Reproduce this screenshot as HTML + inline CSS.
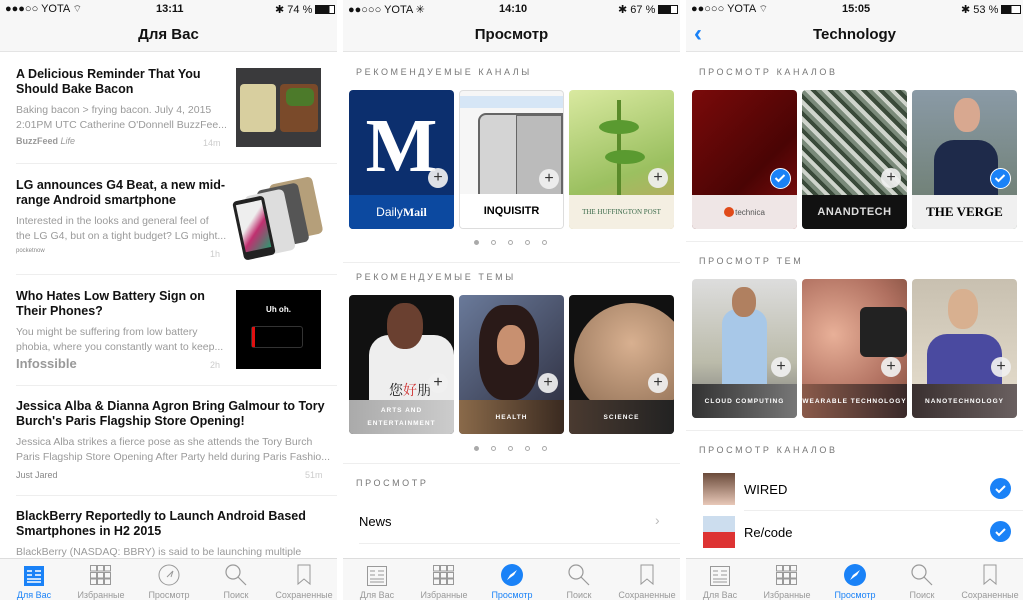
<!DOCTYPE html>
<html><head><meta charset="utf-8"><style>
*{margin:0;padding:0;box-sizing:border-box}
body{width:1023px;height:600px;overflow:hidden;background:#fff;font-family:"Liberation Sans","DejaVu Sans",sans-serif;position:relative;color:#000}
.p{position:absolute;top:0;height:600px;width:337px;overflow:hidden;background:#fff}
.a{position:absolute}
.sb{position:absolute;left:0;right:0;top:0;height:52px;background:#f7f7f7;border-bottom:1px solid #e4e4e4}
.st{position:absolute;top:3px;font-size:11px;color:#111}
.nt{position:absolute;top:26px;left:0;right:0;text-align:center;font-size:15px;font-weight:bold;color:#111}
.tb{position:absolute;left:0;right:0;top:558px;height:42px;background:#f7f7f7;border-top:1px solid #ddd}
.ti{position:absolute;top:31px;font-size:9px;color:#999;width:68px;text-align:center}
.h{font-weight:bold;font-size:12.5px;line-height:15px;color:#111}
.d{font-size:10.5px;line-height:15px;color:#9a9a9a}
.d span{display:block;white-space:nowrap;overflow:hidden}
.src{font-size:9px;color:#888}
.tm{font-size:9px;color:#ccc}
.sep{position:absolute;height:1px;background:#eee}
.lab{position:absolute;font-size:9px;letter-spacing:2.6px;color:#777}
.card{position:absolute;width:105px;height:139px;border-radius:4px;overflow:hidden}
.cb{position:absolute;left:0;right:0;bottom:0;height:34px;display:flex;align-items:center;justify-content:center;text-align:center}
.plus{position:absolute;width:20px;height:20px;border-radius:50%;background:rgba(240,240,240,.92);font-size:16px;line-height:19px;text-align:center;color:#333}
.chk{position:absolute;width:21px;height:21px;border-radius:50%;background:#1a82f7;border:1.5px solid #fff}
.tt{font-size:6.5px;letter-spacing:1px;color:#fff;font-weight:bold;line-height:13px}
.dots{position:absolute;display:flex;gap:12px}
.dots i{display:block;width:5px;height:5px;border-radius:50%;border:1px solid #aaa}
.dots i:first-child{background:#aaa}
</style></head><body>

<!-- PANEL 1 -->
<div class="p" style="left:0">
<div class="sb"><div class="st" style="left:5px">●●●○○ YOTA <span style="font-size:10px">⌔</span></div><div class="st" style="left:156px;font-weight:bold">13:11</div><div class="st" style="left:275px">✱ 74 % <span style="display:inline-block;width:20px;height:9px;border:1px solid #111;vertical-align:-1px;background:linear-gradient(90deg,#111 74%,#fff 74%)"></span></div>
<div class="nt">Для Вас</div></div>

<div class="a" style="left:16px;top:67px;width:210px"><div class="h">A Delicious Reminder That You Should Bake Bacon</div><div class="d" style="margin-top:6px"><span>Baking bacon &gt; frying bacon. July 4, 2015</span><span>2:01PM UTC Catherine O'Donnell BuzzFee...</span></div></div>
<div class="a src" style="left:16px;top:136px;font-weight:bold;color:#999">BuzzFeed <i style="font-weight:normal">Life</i></div><div class="a tm" style="left:203px;top:138px">14m</div>
<div class="a" style="left:236px;top:68px;width:85px;height:79px;background:#3a3a3c"><div class="a" style="left:4px;top:16px;width:36px;height:48px;background:#d8cf9f;border-radius:4px"></div><div class="a" style="left:44px;top:16px;width:38px;height:48px;background:#7a4a2a;border-radius:4px"></div><div class="a" style="left:50px;top:20px;width:28px;height:18px;background:#4c7a2a;border-radius:6px"></div></div>
<div class="sep" style="left:16px;right:0;top:163px"></div>

<div class="a" style="left:16px;top:178px;width:210px"><div class="h">LG announces G4 Beat, a new mid-range Android smartphone</div><div class="d" style="margin-top:6px"><span>Interested in the looks and general feel of</span><span>the LG G4, but on a tight budget? LG might...</span></div></div>
<div class="a src" style="left:16px;top:248px;font-size:6px">pocketnow</div><div class="a tm" style="left:210px;top:249px">1h</div>
<div class="a" style="left:236px;top:180px;width:85px;height:80px"><div class="a" style="left:38px;top:0;width:44px;height:58px;background:#b59f7a;transform:rotate(-12deg);border-radius:5px"></div><div class="a" style="left:26px;top:6px;width:42px;height:60px;background:#555;transform:rotate(-12deg);border-radius:5px"></div><div class="a" style="left:14px;top:12px;width:40px;height:62px;background:#ddd;transform:rotate(-12deg);border-radius:5px"></div><div class="a" style="left:2px;top:18px;width:32px;height:60px;background:#222;transform:rotate(-12deg);border-radius:4px"><div style="margin:4px 3px;height:48px;background:linear-gradient(135deg,#eee 40%,#c03070 60%,#2a9a70)"></div></div></div>
<div class="sep" style="left:16px;right:0;top:274px"></div>

<div class="a" style="left:16px;top:289px;width:210px"><div class="h">Who Hates Low Battery Sign on Their Phones?</div><div class="d" style="margin-top:6px"><span>You might be suffering from low battery</span><span>phobia, where you constantly want to keep...</span></div></div>
<div class="a" style="left:16px;top:356px;font-size:13px;font-weight:bold;color:#999">Infossible</div><div class="a tm" style="left:210px;top:360px">2h</div>
<div class="a" style="left:236px;top:290px;width:85px;height:79px;background:#000"><div class="a" style="left:0;right:0;top:15px;text-align:center;color:#fff;font-size:8px;font-weight:bold">Uh oh.</div><div class="a" style="left:15px;top:36px;width:52px;height:22px;border:1px solid #333;border-radius:3px"><div style="width:3px;height:20px;background:#e01010"></div></div></div>
<div class="sep" style="left:16px;right:0;top:385px"></div>

<div class="a" style="left:16px;top:399px;width:315px"><div class="h">Jessica Alba &amp; Dianna Agron Bring Galmour to Tory Burch's Paris Flagship Store Opening!</div><div class="d" style="margin-top:6px"><span>Jessica Alba strikes a fierce pose as she attends the Tory Burch</span><span>Paris Flagship Store Opening After Party held during Paris Fashio...</span></div></div>
<div class="a src" style="left:16px;top:470px">Just Jared</div><div class="a tm" style="left:305px;top:470px">51m</div>
<div class="sep" style="left:16px;right:0;top:495px"></div>

<div class="a" style="left:16px;top:509px;width:315px"><div class="h">BlackBerry Reportedly to Launch Android Based Smartphones in H2 2015</div><div class="d" style="margin-top:6px"><span>BlackBerry (NASDAQ: BBRY) is said to be launching multiple</span></div></div>

<div class="tb">
<svg class="a" style="left:24px;top:7px" width="20" height="20"><rect x="0" y="0" width="20" height="20" fill="#1a82f7"/><path d="M3 5h5M3 9h5M3 13h14M3 16h14M11 5h6M11 9h6" stroke="#fff" stroke-width="1.5"/></svg>
<div class="ti" style="left:0;color:#1a82f7">Для Вас</div>
<svg class="a" style="left:90px;top:6px" width="22" height="20" fill="none" stroke="#999"><rect x=".5" y=".5" width="6" height="5.5"/><rect x="7.5" y=".5" width="6" height="5.5"/><rect x="14.5" y=".5" width="6" height="5.5"/><rect x=".5" y="7.5" width="6" height="5.5"/><rect x="7.5" y="7.5" width="6" height="5.5"/><rect x="14.5" y="7.5" width="6" height="5.5"/><rect x=".5" y="14" width="6" height="5.5"/><rect x="7.5" y="14" width="6" height="5.5"/><rect x="14.5" y="14" width="6" height="5.5"/></svg>
<div class="ti" style="left:67px">Избранные</div>
<svg class="a" style="left:158px;top:5px" width="22" height="22" fill="none" stroke="#999"><circle cx="11" cy="11" r="10"/><path d="M15 7l-6 6M15 7l-2 6"/></svg>
<div class="ti" style="left:135px">Просмотр</div>
<svg class="a" style="left:225px;top:5px" width="22" height="22" fill="none" stroke="#999" stroke-width="1.2"><circle cx="8" cy="8" r="7"/><path d="M13 13l8 8"/></svg>
<div class="ti" style="left:202px">Поиск</div>
<svg class="a" style="left:297px;top:5px" width="14" height="22" fill="none" stroke="#999"><path d="M1 1h12v19l-6-5-6 5z"/></svg>
<div class="ti" style="left:270px">Сохраненные</div>
</div>
</div>

<!-- PANEL 2 -->
<div class="p" style="left:343px">
<div class="sb"><div class="st" style="left:5px">●●○○○ YOTA ✳</div><div class="st" style="left:156px;font-weight:bold">14:10</div><div class="st" style="left:275px">✱ 67 % <span style="display:inline-block;width:20px;height:9px;border:1px solid #111;vertical-align:-1px;background:linear-gradient(90deg,#111 67%,#fff 67%)"></span></div>
<div class="nt">Просмотр</div></div>
<div class="lab" style="left:13px;top:67px">РЕКОМЕНДУЕМЫЕ КАНАЛЫ</div>
<div class="card" style="left:6px;top:90px;background:#0c2f6e"><div class="a" style="left:0;right:0;top:16px;text-align:center;font-family:'Liberation Serif',serif;font-size:76px;font-weight:bold;color:#fff;line-height:80px">M</div><div class="cb" style="background:#0c49a0;color:#fff;font-size:12px">Daily<b style="font-family:'Liberation Serif',serif">Mail</b></div><div class="plus" style="left:79px;top:78px">+</div></div>
<div class="card" style="left:116px;top:90px;background:#f6f6f6;border:1px solid #ddd"><div class="a" style="left:0;right:0;top:5px;height:12px;background:#d6e6f6"></div><div class="a" style="left:18px;top:22px;width:86px;height:86px;background:#d4d4d4;border:2px solid #666;border-radius:8px 0 0 0"></div><div class="a" style="left:56px;top:24px;width:46px;height:82px;background:#bbb;border:1px solid #666"></div><div class="a" style="left:18px;top:104px;width:86px;height:5px;background:#b05a30"></div><div class="cb" style="background:#fff;font-weight:bold;font-size:11px">INQUISITR</div><div class="plus" style="left:79px;top:78px">+</div></div>
<div class="card" style="left:226px;top:90px;background:linear-gradient(160deg,#d9e9a0,#9bc060 60%,#c8a060)"><div class="a" style="left:48px;top:10px;width:4px;height:95px;background:#5a8a2a"></div><div class="a" style="left:30px;top:30px;width:40px;height:14px;background:#5a9a30;border-radius:50%"></div><div class="a" style="left:36px;top:60px;width:40px;height:14px;background:#5a9a30;border-radius:50%"></div><div class="cb" style="background:#f4efe2;font-family:'Liberation Serif',serif;font-size:7px;color:#3a6a4a">THE HUFFINGTON POST</div><div class="plus" style="left:79px;top:78px">+</div></div>
<div class="dots" style="left:131px;top:240px"><i></i><i></i><i></i><i></i><i></i></div>
<div class="sep" style="left:0;right:0;top:262px"></div>
<div class="lab" style="left:13px;top:272px">РЕКОМЕНДУЕМЫЕ ТЕМЫ</div>
<div class="card" style="left:6px;top:295px;background:#111"><div class="a" style="left:20px;top:40px;width:85px;height:70px;background:#eee;border-radius:20px 20px 0 0"></div><div class="a" style="left:38px;top:8px;width:36px;height:46px;background:#6a4030;border-radius:45%"></div><div class="a" style="left:40px;top:85px;font-size:14px;color:#222;font-family:'Noto Serif CJK SC',serif">您<span style="color:#d03030">好</span>朋</div><div class="cb" style="background:linear-gradient(90deg,#aaa,#ccc);"><div class="tt">ARTS AND<br>ENTERTAINMENT</div></div><div class="plus" style="left:79px;top:78px">+</div></div>
<div class="card" style="left:116px;top:295px;background:linear-gradient(135deg,#6a7a9a,#2a2a3a)"><div class="a" style="left:20px;top:10px;width:60px;height:95px;background:#2a1a18;border-radius:40%"></div><div class="a" style="left:38px;top:30px;width:28px;height:40px;background:#c89070;border-radius:45%"></div><div class="cb" style="background:linear-gradient(90deg,#8a6a4a,#3a2a20)"><div class="tt">HEALTH</div></div><div class="plus" style="left:79px;top:78px">+</div></div>
<div class="card" style="left:226px;top:295px;background:#111"><div class="a" style="left:5px;top:8px;width:115px;height:115px;border-radius:50%;background:radial-gradient(circle at 50% 35%,#d8b090,#8a6a50)"></div><div class="cb" style="background:linear-gradient(90deg,#4a3a30,#222)"><div class="tt">SCIENCE</div></div><div class="plus" style="left:79px;top:78px">+</div></div>
<div class="dots" style="left:131px;top:446px"><i></i><i></i><i></i><i></i><i></i></div>
<div class="sep" style="left:0;right:0;top:463px"></div>
<div class="lab" style="left:13px;top:478px">ПРОСМОТР</div>
<div class="a" style="left:16px;top:514px;font-size:13px">News</div>
<div class="a" style="left:312px;top:512px;font-size:14px;color:#bbb">›</div>
<div class="sep" style="left:16px;right:0;top:543px"></div>
<div class="tb">
<svg class="a" style="left:24px;top:7px" width="20" height="20" fill="none" stroke="#999"><rect x=".5" y=".5" width="19" height="19"/><path d="M3 5h5M3 9h5M3 13h14M3 16h14M11 5h6M11 9h6"/></svg>
<div class="ti" style="left:0">Для Вас</div>
<svg class="a" style="left:90px;top:6px" width="22" height="20" fill="none" stroke="#999"><rect x=".5" y=".5" width="6" height="5.5"/><rect x="7.5" y=".5" width="6" height="5.5"/><rect x="14.5" y=".5" width="6" height="5.5"/><rect x=".5" y="7.5" width="6" height="5.5"/><rect x="7.5" y="7.5" width="6" height="5.5"/><rect x="14.5" y="7.5" width="6" height="5.5"/><rect x=".5" y="14" width="6" height="5.5"/><rect x="7.5" y="14" width="6" height="5.5"/><rect x="14.5" y="14" width="6" height="5.5"/></svg>
<div class="ti" style="left:67px">Избранные</div>
<svg class="a" style="left:158px;top:5px" width="22" height="22"><circle cx="11" cy="11" r="11" fill="#1a82f7"/><path d="M16 6l-7 5-3 5 7-5z" fill="#fff"/></svg>
<div class="ti" style="left:135px;color:#1a82f7">Просмотр</div>
<svg class="a" style="left:225px;top:5px" width="22" height="22" fill="none" stroke="#999" stroke-width="1.2"><circle cx="8" cy="8" r="7"/><path d="M13 13l8 8"/></svg>
<div class="ti" style="left:202px">Поиск</div>
<svg class="a" style="left:297px;top:5px" width="14" height="22" fill="none" stroke="#999"><path d="M1 1h12v19l-6-5-6 5z"/></svg>
<div class="ti" style="left:270px">Сохраненные</div>
</div>
</div>

<!-- PANEL 3 -->
<div class="p" style="left:686px">
<div class="sb"><div class="st" style="left:5px">●●○○○ YOTA <span style="font-size:10px">⌔</span></div><div class="st" style="left:156px;font-weight:bold">15:05</div><div class="st" style="left:275px">✱ 53 % <span style="display:inline-block;width:20px;height:9px;border:1px solid #111;vertical-align:-1px;background:linear-gradient(90deg,#111 53%,#fff 53%)"></span></div>
<div class="a" style="left:8px;top:20px;font-size:24px;color:#1a82f7;font-weight:bold">‹</div>
<div class="nt">Technology</div></div>
<div class="lab" style="left:13px;top:67px">ПРОСМОТР КАНАЛОВ</div>
<div class="card" style="left:6px;top:90px;background:linear-gradient(135deg,#7a0a0a,#4a0404 60%,#8a1010)"><div class="cb" style="background:#efe6e6;font-size:8px;color:#555"><span style="display:inline-block;width:10px;height:10px;border-radius:50%;background:#e04a1a;margin-right:1px"></span>technica</div><div class="chk" style="left:78px;top:78px"><svg width="18" height="18"><path d="M4.5 9l3 3 6-6" stroke="#fff" stroke-width="2" fill="none"/></svg></div></div>
<div class="card" style="left:116px;top:90px;background:repeating-linear-gradient(45deg,#7a8a7a 0 4px,#cfd4cc 4px 8px,#3a4a3a 8px 12px)"><div class="cb" style="background:#111;color:#ddd;font-weight:bold;font-size:11px;letter-spacing:.5px">ANANDTECH</div><div class="plus" style="left:79px;top:78px">+</div></div>
<div class="card" style="left:226px;top:90px;background:linear-gradient(180deg,#8a9aa6,#6a7a6a)"><div class="a" style="left:22px;top:50px;width:64px;height:60px;background:#1e2a4a;border-radius:20px 20px 0 0"></div><div class="a" style="left:42px;top:8px;width:26px;height:34px;background:#d8a890;border-radius:45%"></div><div class="cb" style="background:#f0f0f0;font-weight:bold;font-size:13px;font-family:'Liberation Serif',serif">THE VERGE</div><div class="chk" style="left:78px;top:78px"><svg width="18" height="18"><path d="M4.5 9l3 3 6-6" stroke="#fff" stroke-width="2" fill="none"/></svg></div></div>
<div class="sep" style="left:0;right:0;top:241px"></div>
<div class="lab" style="left:13px;top:256px">ПРОСМОТР ТЕМ</div>
<div class="card" style="left:6px;top:279px;background:linear-gradient(180deg,#ddd,#bba 60%,#777)"><div class="a" style="left:30px;top:30px;width:45px;height:80px;background:#a8c8e8;border-radius:15px 15px 0 0"></div><div class="a" style="left:40px;top:8px;width:24px;height:30px;background:#b08060;border-radius:45%"></div><div class="cb" style="background:linear-gradient(90deg,#333,#777)"><div class="tt">CLOUD COMPUTING</div></div><div class="plus" style="left:79px;top:78px">+</div></div>
<div class="card" style="left:116px;top:279px;background:radial-gradient(circle at 30% 40%,#e8b098,#b07060 60%,#7a4a3a)"><div class="a" style="left:58px;top:28px;width:47px;height:50px;background:#222;border-radius:6px"></div><div class="cb" style="background:linear-gradient(90deg,#8a5a4a,#3a2a2a)"><div class="tt">WEARABLE TECHNOLOGY</div></div><div class="plus" style="left:79px;top:78px">+</div></div>
<div class="card" style="left:226px;top:279px;background:linear-gradient(180deg,#c8c0b0,#e8e0d0)"><div class="a" style="left:15px;top:55px;width:75px;height:60px;background:#4a4aa0;border-radius:20px 20px 0 0"></div><div class="a" style="left:36px;top:10px;width:30px;height:40px;background:#d8b090;border-radius:45%"></div><div class="cb" style="background:linear-gradient(90deg,#3a3030,#6a6060)"><div class="tt">NANOTECHNOLOGY</div></div><div class="plus" style="left:79px;top:78px">+</div></div>
<div class="sep" style="left:0;right:0;top:430px"></div>
<div class="lab" style="left:13px;top:445px">ПРОСМОТР КАНАЛОВ</div>
<div class="a" style="left:17px;top:473px;width:32px;height:32px;background:linear-gradient(180deg,#6a4a3a,#e8c8b8)"></div>
<div class="a" style="left:58px;top:482px;font-size:13px">WIRED</div>
<div class="chk" style="left:304px;top:478px;border:none"><svg width="21" height="21"><path d="M6 11l3 3 6-6" stroke="#fff" stroke-width="2" fill="none"/></svg></div>
<div class="sep" style="left:58px;right:0;top:510px"></div>
<div class="a" style="left:17px;top:516px;width:32px;height:32px;background:linear-gradient(180deg,#cde 50%,#d33 50%)"></div>
<div class="a" style="left:58px;top:525px;font-size:13px">Re/code</div>
<div class="chk" style="left:304px;top:521px;border:none"><svg width="21" height="21"><path d="M6 11l3 3 6-6" stroke="#fff" stroke-width="2" fill="none"/></svg></div>
<div class="tb">
<svg class="a" style="left:24px;top:7px" width="20" height="20" fill="none" stroke="#999"><rect x=".5" y=".5" width="19" height="19"/><path d="M3 5h5M3 9h5M3 13h14M3 16h14M11 5h6M11 9h6"/></svg>
<div class="ti" style="left:0">Для Вас</div>
<svg class="a" style="left:90px;top:6px" width="22" height="20" fill="none" stroke="#999"><rect x=".5" y=".5" width="6" height="5.5"/><rect x="7.5" y=".5" width="6" height="5.5"/><rect x="14.5" y=".5" width="6" height="5.5"/><rect x=".5" y="7.5" width="6" height="5.5"/><rect x="7.5" y="7.5" width="6" height="5.5"/><rect x="14.5" y="7.5" width="6" height="5.5"/><rect x=".5" y="14" width="6" height="5.5"/><rect x="7.5" y="14" width="6" height="5.5"/><rect x="14.5" y="14" width="6" height="5.5"/></svg>
<div class="ti" style="left:67px">Избранные</div>
<svg class="a" style="left:158px;top:5px" width="22" height="22"><circle cx="11" cy="11" r="11" fill="#1a82f7"/><path d="M16 6l-7 5-3 5 7-5z" fill="#fff"/></svg>
<div class="ti" style="left:135px;color:#1a82f7">Просмотр</div>
<svg class="a" style="left:225px;top:5px" width="22" height="22" fill="none" stroke="#999" stroke-width="1.2"><circle cx="8" cy="8" r="7"/><path d="M13 13l8 8"/></svg>
<div class="ti" style="left:202px">Поиск</div>
<svg class="a" style="left:297px;top:5px" width="14" height="22" fill="none" stroke="#999"><path d="M1 1h12v19l-6-5-6 5z"/></svg>
<div class="ti" style="left:270px">Сохраненные</div>
</div>
</div>
</body></html>
